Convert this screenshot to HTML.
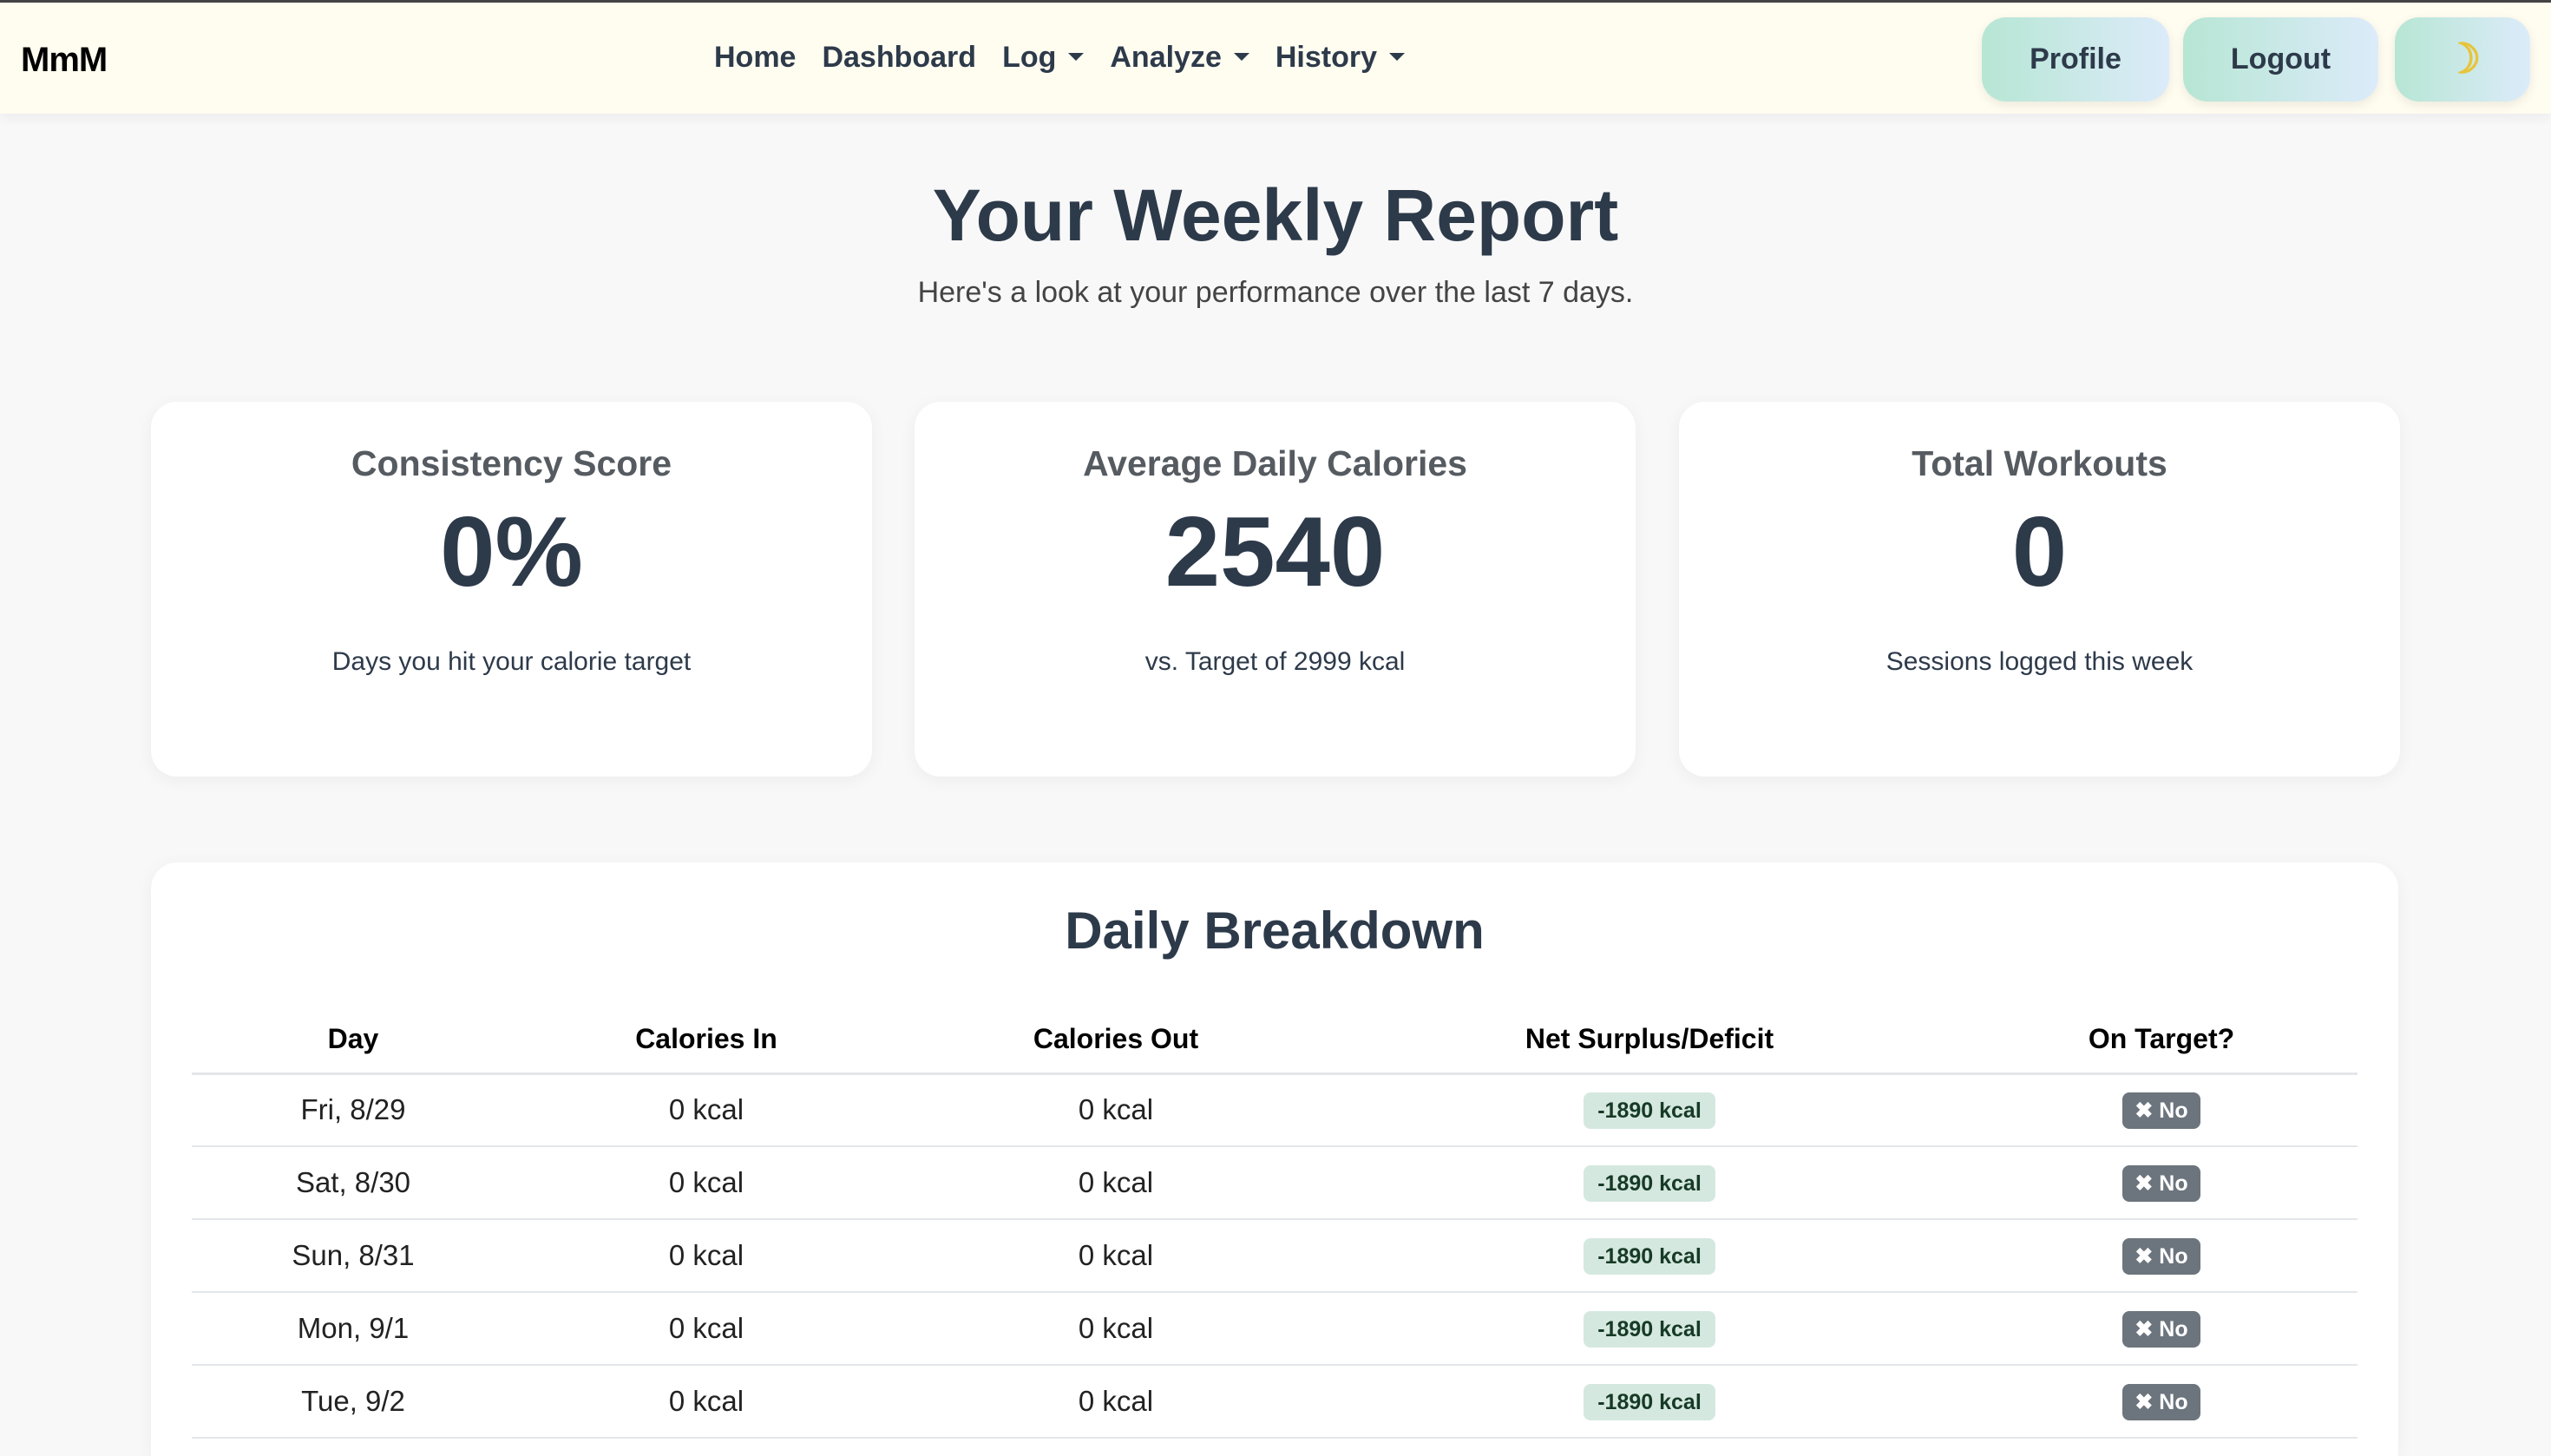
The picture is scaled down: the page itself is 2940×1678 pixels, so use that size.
<!DOCTYPE html>
<html style="height:1678px;overflow:hidden"><head><meta charset="utf-8"><style>
*{box-sizing:border-box;margin:0;padding:0}
body{width:2940px;height:1678px;background:#f8f8f8;font-family:"Liberation Sans",sans-serif;color:#2d3a4a;position:relative;overflow:hidden}
.nav{position:absolute;left:0;top:0;width:2940px;height:131px;background:#fffcf0;border-top:3px solid #444;box-shadow:0 4px 14px rgba(0,0,0,.06)}
.logo{position:absolute;left:24px;top:44px;font-size:40px;font-weight:bold;color:#000;letter-spacing:-1px}
.links{position:absolute;left:823px;top:44px;font-size:34px;font-weight:bold;color:#2d3a4a;white-space:nowrap}
.links span{margin-right:30px}
.car{display:inline-block;border-left:9px solid transparent;border-right:9px solid transparent;border-top:9px solid #2d3a4a;vertical-align:middle;margin-left:14px;margin-bottom:6px}
.btn{position:absolute;top:17px;height:97px;border-radius:28px;background:linear-gradient(90deg,#b7e6d4,#dcebfa);font-size:34px;font-weight:bold;color:#2d3a4a;text-align:center;line-height:97px;box-shadow:0 4px 12px rgba(0,0,0,.08)}
h1{position:absolute;left:0;width:2940px;top:200px;text-align:center;font-size:84px;font-weight:bold;color:#2d3a4a}
.sub{position:absolute;left:0;width:2940px;top:318px;text-align:center;font-size:34px;color:#444}
.card{position:absolute;top:463px;height:432px;width:831px;background:#fff;border-radius:30px;box-shadow:0 4px 20px rgba(0,0,0,.05);text-align:center}
.ct{margin-top:48px;font-size:41px;font-weight:bold;color:#555b60}
.cv{margin-top:14px;font-size:114px;font-weight:bold;color:#2d3a4a;line-height:130px}
.cd{margin-top:44px;font-size:30px;color:#2d3a4a}
.big{position:absolute;left:174px;top:994px;width:2590px;height:684px;background:#fff;border-radius:30px 30px 0 0;box-shadow:0 4px 20px rgba(0,0,0,.05);overflow:hidden}
.big h2{text-align:center;font-size:60px;font-weight:bold;margin-top:44px;color:#2d3a4a}
table{position:absolute;left:47px;top:166px;width:2496px;border-collapse:collapse}
th{font-size:32px;font-weight:bold;color:#000;height:77px;border-bottom:3px solid #e3e6ea;text-align:center}
td{font-size:33px;color:#222;height:84px;border-bottom:2px solid #e3e6ea;text-align:center}
.g{display:inline-block;background:#d5e8df;color:#163a26;font-size:25px;font-weight:bold;padding:0 16px;height:42px;line-height:42px;border-radius:8px}
.n{display:inline-block;background:#6c757d;color:#fff;font-size:25px;font-weight:bold;padding:0 14px;height:42px;line-height:42px;border-radius:8px}
</style></head><body>
<div class="nav">
<div class="logo">MmM</div>
<div class="links"><span>Home</span><span>Dashboard</span><span>Log<i class="car"></i></span><span>Analyze<i class="car"></i></span><span>History<i class="car"></i></span></div>
<div class="btn" style="left:2284px;width:216px">Profile</div>
<div class="btn" style="left:2516px;width:225px">Logout</div>
<div class="btn" style="left:2760px;width:156px;color:#e8c43a;font-size:48px">&#9789;</div>
</div>
<h1>Your Weekly Report</h1>
<div class="sub">Here's a look at your performance over the last 7 days.</div>
<div class="card" style="left:174px"><div class="ct">Consistency Score</div><div class="cv">0%</div><div class="cd">Days you hit your calorie target</div></div>
<div class="card" style="left:1054px"><div class="ct">Average Daily Calories</div><div class="cv">2540</div><div class="cd">vs. Target of 2999 kcal</div></div>
<div class="card" style="left:1935px"><div class="ct">Total Workouts</div><div class="cv">0</div><div class="cd">Sessions logged this week</div></div>
<div class="big"><h2>Daily Breakdown</h2>
<table>
<colgroup><col style="width:372px"><col style="width:442px"><col style="width:502px"><col style="width:728px"><col style="width:452px"></colgroup>
<tr><th>Day</th><th>Calories In</th><th>Calories Out</th><th>Net Surplus/Deficit</th><th>On Target?</th></tr>
<tr><td>Fri, 8/29</td><td>0 kcal</td><td>0 kcal</td><td><span class="g">-1890 kcal</span></td><td><span class="n">&#10006; No</span></td></tr>
<tr><td>Sat, 8/30</td><td>0 kcal</td><td>0 kcal</td><td><span class="g">-1890 kcal</span></td><td><span class="n">&#10006; No</span></td></tr>
<tr><td>Sun, 8/31</td><td>0 kcal</td><td>0 kcal</td><td><span class="g">-1890 kcal</span></td><td><span class="n">&#10006; No</span></td></tr>
<tr><td>Mon, 9/1</td><td>0 kcal</td><td>0 kcal</td><td><span class="g">-1890 kcal</span></td><td><span class="n">&#10006; No</span></td></tr>
<tr><td>Tue, 9/2</td><td>0 kcal</td><td>0 kcal</td><td><span class="g">-1890 kcal</span></td><td><span class="n">&#10006; No</span></td></tr>
</table></div>
</body></html>
